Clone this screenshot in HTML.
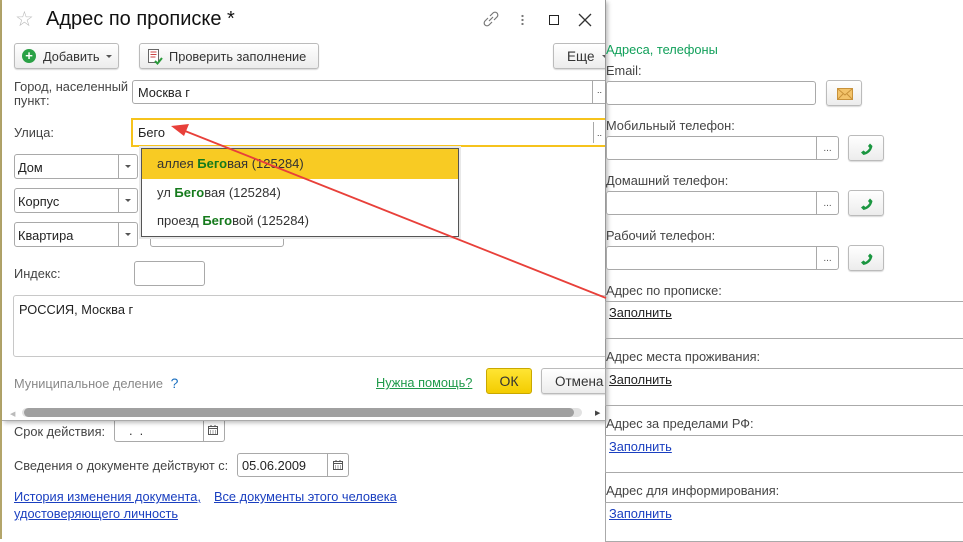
<!DOCTYPE html>
<html><head><meta charset="utf-8"><style>
*{box-sizing:border-box;margin:0;padding:0}
body{width:963px;height:539px;overflow:hidden;background:#fff;font-family:"Liberation Sans",Arial,sans-serif;font-size:12.8px;color:#333;position:relative}
.a{position:absolute;white-space:nowrap}
.inp{position:absolute;border:1px solid #a9a9a9;border-radius:3px;background:#fff}
.btn{position:absolute;border:1px solid #bbb;border-radius:3px;background:linear-gradient(#fff,#ececec);box-shadow:0 1px 1px rgba(0,0,0,.15);color:#333}
.lbl{color:#444}
.dots{position:absolute;top:0;bottom:0;right:0;width:22px;border-left:1px solid #a9a9a9;font-size:10px;text-align:center;line-height:24px;color:#555}
.arr{position:absolute;top:0;bottom:0;right:0;width:19px;border-left:1px solid #a9a9a9}
.arr:after{content:"";position:absolute;left:6px;top:10px;border:3px solid transparent;border-top:3px solid #555}
.lnk{color:#1a3fc0;text-decoration:underline}
</style></head><body>
<div class="a" style="left:0;top:0;width:2px;height:539px;background:#b3a56a"></div>
<!-- under dialog -->
<div class="a lbl" style="left:14px;top:424px">Срок действия:</div>
<div class="inp" style="left:114px;top:418px;width:111px;height:24px"><span class="a" style="left:14px;top:4px">. &nbsp;.</span></div>
<div class="a" style="left:203px;top:419px;width:1px;height:22px;background:#a9a9a9"></div>
<svg class="a" style="left:208px;top:425px" width="10" height="10"><rect x="0.5" y="1.5" width="9" height="8" fill="none" stroke="#555"/><path d="M0 3.5h10M2 6h1M4.5 6h1M7 6h1M2 8h1M4.5 8h1M7 8h1M3 0v2M7 0v2" stroke="#555"/></svg>
<div class="a lbl" style="left:14px;top:458px">Сведения о документе действуют с:</div>
<div class="inp" style="left:237px;top:453px;width:112px;height:24px"><span class="a" style="left:4px;top:4px;color:#222">05.06.2009</span></div>
<div class="a" style="left:327px;top:454px;width:1px;height:22px;background:#a9a9a9"></div>
<svg class="a" style="left:333px;top:460px" width="10" height="10"><rect x="0.5" y="1.5" width="9" height="8" fill="none" stroke="#555"/><path d="M0 3.5h10M2 6h1M4.5 6h1M7 6h1M2 8h1M4.5 8h1M7 8h1M3 0v2M7 0v2" stroke="#555"/></svg>
<div class="a lnk" style="left:14px;top:489px">История изменения документа,</div>
<div class="a lnk" style="left:214px;top:489px">Все документы этого человека</div>
<div class="a lnk" style="left:14px;top:506px">удостоверяющего личность</div>
<!-- dialog -->
<div class="a" style="left:2px;top:0;width:604px;height:421px;overflow:hidden;background:#fff;border-bottom:1px solid #aaa;box-shadow:2px 2px 4px rgba(0,0,0,.25)">
<div class="a" style="left:-2px;top:0;width:620px;height:421px">
<div class="a" style="left:15px;top:7px;font-size:21px;color:#bbb">☆</div>
<div class="a" style="left:46px;top:8px;font-size:20px;color:#111">Адрес по прописке *</div>
<svg class="a" style="left:482px;top:10px" width="18" height="18"><path d="M8 6l3-3a2.5 2.5 0 0 1 4 4l-3 3M10 12l-3 3a2.5 2.5 0 0 1-4-4l3-3M7 11l4-4" stroke="#777" fill="none" stroke-width="1.2"/></svg>
<div class="a" style="left:521px;top:14px;width:3px;height:11px;background:radial-gradient(circle,#777 1px,transparent 1.3px) 0 0/3px 4px"></div>
<div class="a" style="left:549px;top:15px;width:10px;height:10px;border:1.5px solid #222"></div>
<svg class="a" style="left:578px;top:13px" width="14" height="14"><path d="M1 1L13 13M13 1L1 13" stroke="#333" stroke-width="1.3"/></svg>
<div class="btn" style="left:14px;top:43px;width:105px;height:26px"><span class="a" style="left:7px;top:5px;width:14px;height:14px;border-radius:50%;background:#2aa146;color:#fff;font-weight:bold;font-size:13px;line-height:14px;text-align:center">+</span><span class="a" style="left:28px;top:5px">Добавить</span><span class="a" style="left:91px;top:11px;border:3px solid transparent;border-top:3px solid #555"></span></div>
<div class="btn" style="left:139px;top:43px;width:180px;height:26px"><svg class="a" style="left:7px;top:5px" width="16" height="16"><rect x="1.5" y="0.5" width="10" height="13" fill="#fff" stroke="#666"/><path d="M3.5 3h6M3.5 5.5h6M3.5 8h5" stroke="#c44"/><path d="M8 12l2.5 2.5L15 9" stroke="#2a9a3a" stroke-width="2" fill="none"/></svg><span class="a" style="left:29px;top:5px">Проверить заполнение</span></div>
<div class="btn" style="left:553px;top:43px;width:60px;height:26px"><span class="a" style="left:13px;top:5px;font-size:13.5px">Еще</span><span class="a" style="left:48px;top:11px;border:3px solid transparent;border-top:3px solid #555"></span></div>
<div class="a lbl" style="left:14px;top:80px;line-height:14px">Город, населенный<br>пункт:</div>
<div class="inp" style="left:132px;top:80px;width:480px;height:24px"><span class="a" style="left:5px;top:4px;color:#222">Москва г</span><div class="a" style="left:459px;top:0;width:1px;height:22px;background:#a9a9a9"></div></div>
<div class="a" style="left:597px;top:85px;font-size:9px">..</div>
<div class="a lbl" style="left:14px;top:125px">Улица:</div>
<div class="a" style="left:131px;top:118px;width:490px;height:29px;border:2px solid #f6c31c;background:#fff"><span class="a" style="left:5px;top:5px;color:#222">Бего</span><div class="a" style="left:460px;top:2px;width:1px;height:21px;background:#a9a9a9"></div></div>
<div class="a" style="left:597px;top:128px;font-size:9px">..</div>
<div class="inp" style="left:14px;top:154px;width:124px;height:25px"><span class="a" style="left:3px;top:5px;color:#222">Дом</span><div class="arr"></div></div>
<div class="inp" style="left:14px;top:188px;width:124px;height:25px"><span class="a" style="left:3px;top:5px;color:#222">Корпус</span><div class="arr"></div></div>
<div class="inp" style="left:14px;top:222px;width:124px;height:25px"><span class="a" style="left:3px;top:5px;color:#222">Квартира</span><div class="arr"></div></div>
<div class="inp" style="left:150px;top:154px;width:134px;height:25px"></div>
<div class="inp" style="left:150px;top:188px;width:134px;height:25px"></div>
<div class="inp" style="left:150px;top:222px;width:134px;height:25px"></div>
<div class="a" style="left:139px;top:146px;width:322px;height:93px;background:#e8e8e8"></div>
<div class="a" style="left:141px;top:148px;width:318px;height:89px;border:1px solid #555;background:#fff">
<div class="a" style="left:0;top:0;width:316px;height:30px;background:#f8cb23"></div>
<div class="a" style="left:15px;top:7px;color:#333;font-size:13px">аллея <b style="color:#157a1c">Бего</b>вая (125284)</div>
<div class="a" style="left:15px;top:36px;color:#333;font-size:13px">ул <b style="color:#157a1c">Бего</b>вая (125284)</div>
<div class="a" style="left:15px;top:64px;color:#333;font-size:13px">проезд <b style="color:#157a1c">Бего</b>вой (125284)</div>
</div>
<div class="a lbl" style="left:14px;top:266px">Индекс:</div>
<div class="inp" style="left:134px;top:261px;width:71px;height:25px"></div>
<div class="a" style="left:13px;top:295px;width:600px;height:62px;border:1px solid #c8c8c8;border-radius:3px"><span class="a" style="left:5px;top:6px;color:#222">РОССИЯ, Москва г</span></div>
<div class="a" style="left:14px;top:375px;color:#888">Муниципальное деление <span style="color:#1a6fc0;margin-left:4px;font-size:14px">?</span></div>
<div class="a" style="left:376px;top:375px;color:#1f9a4a;text-decoration:underline">Нужна помощь?</div>
<div class="a" style="left:486px;top:368px;width:46px;height:26px;border:1px solid #c9a800;border-radius:3px;background:linear-gradient(#ffe533,#f3cc00);text-align:center;line-height:24px;font-size:14px;color:#333">ОК</div>
<div class="btn" style="left:541px;top:368px;width:70px;height:26px"><span class="a" style="left:13px;top:5px;font-size:13.5px">Отмена</span></div>
<div class="a" style="left:10px;top:410px;font-size:7px;color:#bbb">◀</div>
<div class="a" style="left:22px;top:408px;width:560px;height:9px;border-radius:5px;background:#e2e2e2"></div>
<div class="a" style="left:24px;top:408px;width:550px;height:9px;border-radius:5px;background:#a0a0a0"></div>
<div class="a" style="left:595px;top:409px;font-size:7px;color:#444">▶</div>
</div></div>
<!-- right panel -->
<div class="a" style="left:605px;top:0;width:1px;height:539px;background:#999"></div>
<div class="a" style="left:606px;top:42px;color:#11a05a">Адреса, телефоны</div>
<div class="a lbl" style="left:606px;top:63px">Email:</div>
<div class="inp" style="left:606px;top:81px;width:210px;height:24px"></div>
<div class="btn" style="left:826px;top:80px;width:36px;height:26px"><svg width="16" height="12" style="position:absolute;left:10px;top:7px"><rect x="0.5" y="0.5" width="15" height="11" fill="#f3c36a" stroke="#c8923a"/><path d="M1 1L8 7L15 1M1 11L6 6M15 11L10 6" stroke="#c8923a" fill="none"/></svg></div>
<div class="a lbl" style="left:606px;top:118px">Мобильный телефон:</div>
<div class="inp" style="left:606px;top:136px;width:233px;height:24px"><div class="dots">...</div></div>
<div class="btn" style="left:848px;top:135px;width:36px;height:26px"><svg class="a" style="left:11px;top:6px" width="14" height="14"><path d="M10 1.5l2.5 2.5c-1 5-4 8-9 9L1 10.5l2.5-2 2 1.5c1.5-1 3-2.5 4-4L8 4z" fill="#1a9640"/></svg></div>
<div class="a lbl" style="left:606px;top:173px">Домашний телефон:</div>
<div class="inp" style="left:606px;top:191px;width:233px;height:24px"><div class="dots">...</div></div>
<div class="btn" style="left:848px;top:190px;width:36px;height:26px"><svg class="a" style="left:11px;top:6px" width="14" height="14"><path d="M10 1.5l2.5 2.5c-1 5-4 8-9 9L1 10.5l2.5-2 2 1.5c1.5-1 3-2.5 4-4L8 4z" fill="#1a9640"/></svg></div>
<div class="a lbl" style="left:606px;top:228px">Рабочий телефон:</div>
<div class="inp" style="left:606px;top:246px;width:233px;height:24px"><div class="dots">...</div></div>
<div class="btn" style="left:848px;top:245px;width:36px;height:26px"><svg class="a" style="left:11px;top:6px" width="14" height="14"><path d="M10 1.5l2.5 2.5c-1 5-4 8-9 9L1 10.5l2.5-2 2 1.5c1.5-1 3-2.5 4-4L8 4z" fill="#1a9640"/></svg></div>
<div class="a lbl" style="left:606px;top:283px">Адрес по прописке:</div>
<div class="a" style="left:605px;top:301px;width:380px;height:38px;border:1px solid #aaa"></div>
<div class="a" style="left:609px;top:305px;color:#222;text-decoration:underline">Заполнить</div>
<div class="a lbl" style="left:606px;top:349px">Адрес места проживания:</div>
<div class="a" style="left:605px;top:368px;width:380px;height:38px;border:1px solid #aaa"></div>
<div class="a" style="left:609px;top:372px;color:#222;text-decoration:underline">Заполнить</div>
<div class="a lbl" style="left:606px;top:416px">Адрес за пределами РФ:</div>
<div class="a" style="left:605px;top:435px;width:380px;height:38px;border:1px solid #aaa"></div>
<div class="a lnk" style="left:609px;top:439px">Заполнить</div>
<div class="a lbl" style="left:606px;top:483px">Адрес для информирования:</div>
<div class="a" style="left:605px;top:502px;width:380px;height:40px;border:1px solid #aaa"></div>
<div class="a lnk" style="left:609px;top:506px">Заполнить</div>
<!-- red arrow -->
<svg class="a" style="left:0;top:0" width="963" height="539"><line x1="606" y1="298" x2="180" y2="129" stroke="#e8403a" stroke-width="1.8"/><path d="M171 126L189 124L184 136Z" fill="#e8403a"/></svg>
</body></html>
